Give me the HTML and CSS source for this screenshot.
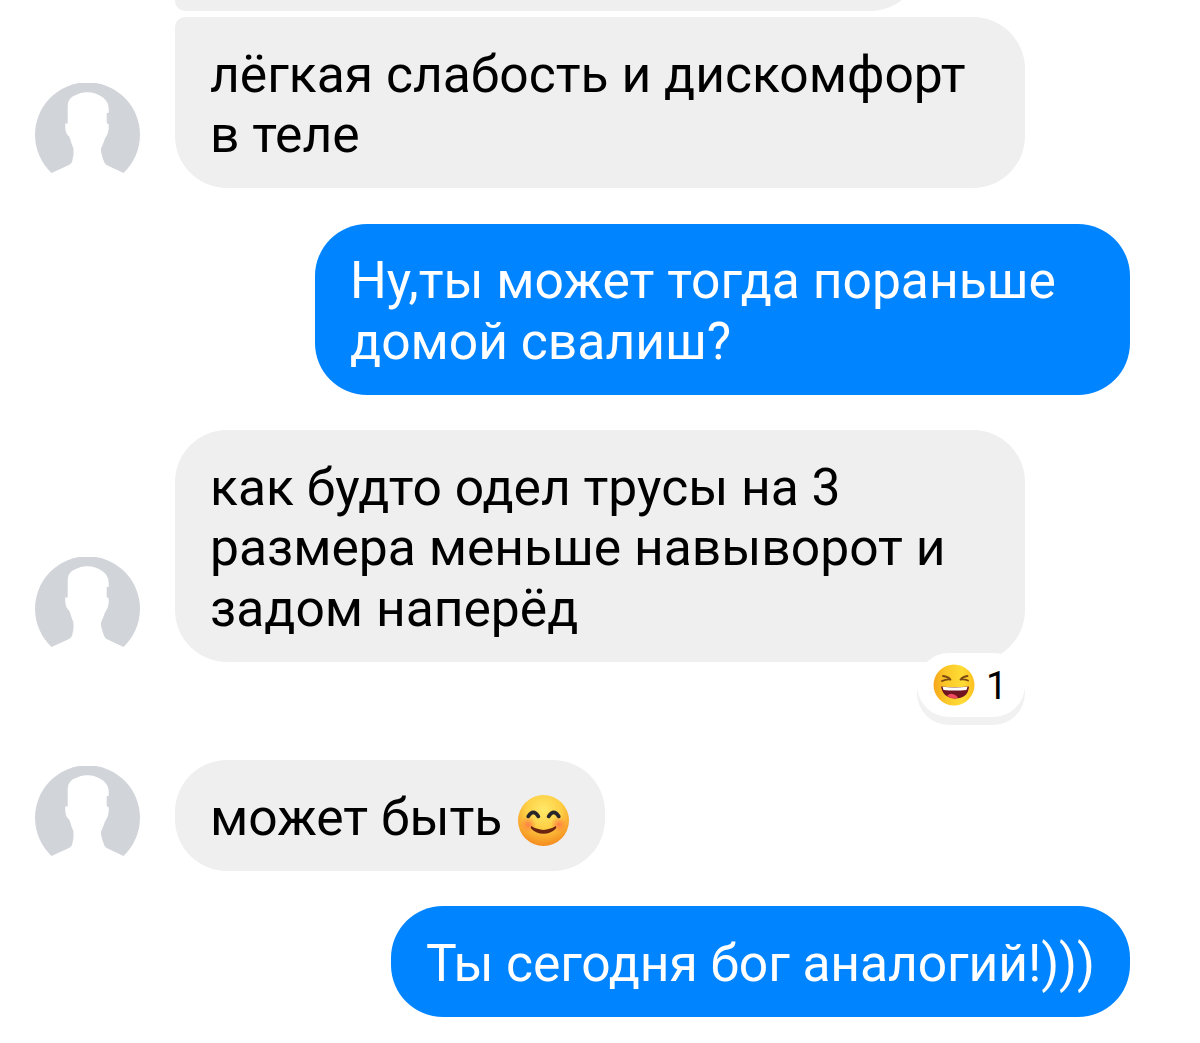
FILE: index.html
```
<!DOCTYPE html>
<html lang="ru">
<head>
    <meta charset="utf-8">
    <title>Чат</title>
    <link rel="stylesheet" href="styles.css">
</head>

<body>

<svg class="defs" width="0" height="0">
    <symbol id="avatar" viewBox="0 0 105 105">
        <path fill="#d1d5da" d="M16.500 90A52.500 52.500 0 1 1 88.500 90L71.500 82Q69 80 68 76L66 69V65.500Q68.500 60 70 55.500Q73 52 73.700 46V41.500L71.700 40V30H73.500Q75 20 68 14.500Q60 9 51.700 9.300Q46 9 41 12L37.500 13.500Q32.500 17 32.700 24V40.500H30.200Q30 49 32.500 52Q34.500 53 35 55.500Q36.500 61 38.500 65.500V72L37 79Q36 81 33 82.500Z"/>
    </symbol>
</svg>

<div class="chat">

    <div class="row cut">
        <div class="bubble first"></div>
    </div>

    <div class="row grouped">
        <svg class="avatar"><use href="#avatar"/></svg>
        <div class="bubble last">лёгкая слабость и дискомфорт<br>в теле</div>
    </div>

    <div class="row mine">
        <div class="bubble">Ну,ты может тогда пораньше<br>домой свалиш?</div>
    </div>

    <div class="row reacted">
        <svg class="avatar"><use href="#avatar"/></svg>
        <div class="bubble">как будто одел трусы на 3<br>размера меньше навыворот и<br>задом наперёд
            <div class="reaction">
                <svg class="laugh" viewBox="0 0 42 42">
                    <defs>
                        <linearGradient id="laughFace" x1="0" y1=".5" x2="1" y2=".5">
                            <stop offset="0" stop-color="#f6a51c"/>
                            <stop offset=".3" stop-color="#fbc829"/>
                            <stop offset=".7" stop-color="#ffdc35"/>
                            <stop offset="1" stop-color="#fbc021"/>
                        </linearGradient>
                    </defs>
                    <circle cx="21" cy="21" r="20.500" fill="url(#laughFace)"/>
                    <path d="M10 12Q15 12.500 17.500 15.500Q13 15 9 17M34.500 12Q30 12.500 27.500 15.500Q32 15 35 16.500" fill="none" stroke="#7b4a12" stroke-width="1.800" stroke-linecap="round" stroke-linejoin="round"/>
                    <path d="M8 22.500Q21 24 36 22.500Q35 34.500 22 34.500Q10 34 8 22.500Z" fill="#6f1420"/>
                    <path d="M9.500 22.800Q21 24 34.500 22.800L33.500 26Q22 27 10.500 26Z" fill="#fff"/>
                    <path d="M14 32Q17 28.500 21 30.500Q24 31 25 34Q19 35.500 14 32Z" fill="#f0485e"/>
                </svg>
                <span class="count">1</span>
            </div>
        </div>
    </div>

    <div class="row">
        <svg class="avatar"><use href="#avatar"/></svg>
        <div class="bubble short">может быть
            <svg class="smile" viewBox="0 0 50 50">
                <defs>
                    <radialGradient id="smileFace" cx=".5" cy=".3" r=".7">
                        <stop offset="0" stop-color="#ffe969"/>
                        <stop offset=".5" stop-color="#fdcf45"/>
                        <stop offset="1" stop-color="#f58a1d"/>
                    </radialGradient>
                    <radialGradient id="cheek">
                        <stop offset="0" stop-color="#ff6d48" stop-opacity=".8"/>
                        <stop offset="1" stop-color="#ff7c3c" stop-opacity="0"/>
                    </radialGradient>
                </defs>
                <circle cx="25" cy="25" r="25" fill="url(#smileFace)"/>
                <circle cx="10" cy="29" r="8" fill="url(#cheek)"/>
                <circle cx="40" cy="29" r="8" fill="url(#cheek)"/>
                <path d="M10 21Q15 13 20 21M30 21Q35 13 40 21" fill="none" stroke="#28262a" stroke-width="3.600" stroke-linecap="round" stroke-linejoin="round"/>
                <path d="M13 30.500Q25 38 37 30.500Q38 31 37 33Q32 38 25 38Q18 38 13 33Q12 31 13 30.500Z" fill="#6b2410"/>
            </svg>
        </div>
    </div>

    <div class="row mine">
        <div class="bubble single">Ты сегодня бог аналогий!)))</div>
    </div>

</div>

</body>
</html>
```

FILE: styles.css
```
* {box-sizing: border-box;}
body {margin: 0; background: #fff; overflow: hidden;}
body {font-family: Roboto, sans-serif; font-size: 51.6px; line-height: 60.5px; color: #000;}

.defs {display: block; height: 0;}
.chat {padding: 0 70px 0 35px;}

.row {display: flex; align-items: flex-end; gap: 35px; margin-bottom: 35px;}
.cut {height: 11px; padding-left: 140px; margin-bottom: 6px;}
.grouped {margin-bottom: 35.5px;}
.mine {justify-content: flex-end;}
.reacted {margin-bottom: 98px;}

.avatar {width: 105px; height: 105px; flex: none;}

.bubble {position: relative; width: 850px; padding: 27.5px 0 23px 35px; border-radius: 52px; background: #efefef; white-space: nowrap;}
.first {width: 747px; height: 111px; border-bottom-left-radius: 10px;}
.last {padding-bottom: 22.5px; border-top-left-radius: 10px;}
.mine .bubble {width: 815px; background: #0084ff; color: #fff;}
.short {display: flex; align-items: center; gap: 16px; width: 430px;}
.mine .single {width: 739px; letter-spacing: -0.1px;}

.smile {width: 51px; height: 51px; margin-top: 5px;}

.reaction {position: absolute; right: 0; bottom: -55px; display: flex; align-items: center; gap: 11px; width: 108px; height: 64px; padding-left: 16px; border-radius: 32px; background: #fff; box-shadow: 0 8px 0 #f1f1f1;}
.laugh {width: 42px; height: 42px;}
.count {font-size: 38px; line-height: 44px; margin-top: 2px;}
```
